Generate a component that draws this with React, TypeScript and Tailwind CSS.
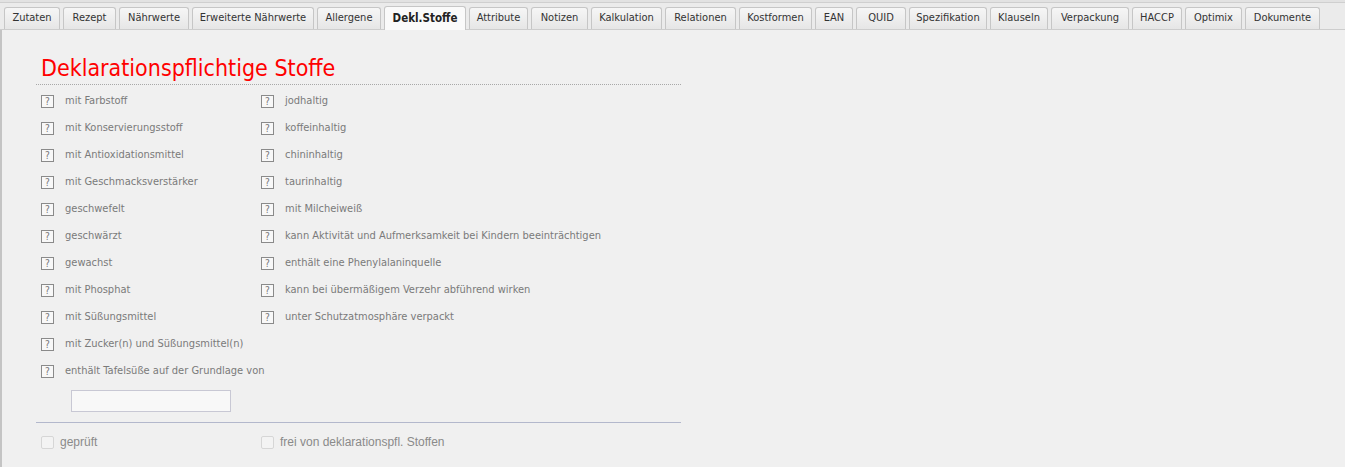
import React from "react";

const tabs: [string, number][] = [
  ["Zutaten", 56],
  ["Rezept", 53],
  ["Nährwerte", 70],
  ["Erweiterte Nährwerte", 122],
  ["Allergene", 64],
  ["Dekl.Stoffe", 82],
  ["Attribute", 59],
  ["Notizen", 57],
  ["Kalkulation", 71],
  ["Relationen", 71],
  ["Kostformen", 73],
  ["EAN", 38],
  ["QUID", 50],
  ["Spezifikation", 78],
  ["Klauseln", 58],
  ["Verpackung", 78],
  ["HACCP", 50],
  ["Optimix", 57],
  ["Dokumente", 75],
];

const left = [
  "mit Farbstoff",
  "mit Konservierungsstoff",
  "mit Antioxidationsmittel",
  "mit Geschmacksverstärker",
  "geschwefelt",
  "geschwärzt",
  "gewachst",
  "mit Phosphat",
  "mit Süßungsmittel",
  "mit Zucker(n) und Süßungsmittel(n)",
  "enthält Tafelsüße auf der Grundlage von",
];
const right = [
  "jodhaltig",
  "koffeinhaltig",
  "chininhaltig",
  "taurinhaltig",
  "mit Milcheiweiß",
  "kann Aktivität und Aufmerksamkeit bei Kindern beeinträchtigen",
  "enthält eine Phenylalaninquelle",
  "kann bei übermäßigem Verzehr abführend wirken",
  "unter Schutzatmosphäre verpackt",
];

const tah = { fontFamily: "Tahoma, 'DejaVu Sans Condensed', 'Liberation Sans', sans-serif" };

function Item({ label }: { label: string }) {
  return (
    <div className="flex items-center h-[27px] whitespace-nowrap">
      <div className="w-[13px] h-[13px] shrink-0 border border-[#8a8a8a] bg-[#f8f8f8] flex items-center justify-center text-[10px] leading-none text-[#777]">?</div>
      <span className="ml-[11px] text-[11px] text-[#7a7a7a]">{label}</span>
    </div>
  );
}

export default function App() {
  return (
    <div className="w-[1345px] h-[467px] bg-[#f0f0f0] overflow-hidden relative" style={tah}>
      <div className="h-[3px] bg-[#e2e2e2] border-b border-[#cfcfcf]" />
      <div className="flex items-end gap-[3px] pl-[4px] h-[27px] bg-[#ebebeb] border-b border-[#cdcdcd]">
        {tabs.map(([t, w]) => {
          const active = t === "Dekl.Stoffe";
          return (
            <div
              key={t}
              style={{ width: w }}
              className={
                active
                  ? "h-[24px] -mb-px flex items-center justify-center rounded-t-[3px] border border-b-0 border-[#c6c6c6] bg-[#fafafa] text-[11.5px] font-bold text-[#222]"
                  : "h-[22px] flex items-center justify-center rounded-t-[3px] border border-b-0 border-[#c6c6c6] bg-gradient-to-b from-[#f6f6f6] to-[#e6e6e6] text-[11px] text-[#333]"
              }
            >
              {t}
            </div>
          );
        })}
      </div>
      <div className="border-l-2 border-[#c4c4c4] h-full pl-[34px] pt-[22px]">
        <div className="w-[645px]">
          <div className="pl-[5px] text-[23px] leading-[32px] text-[#ff0000]">Deklarationspflichtige Stoffe</div>
          <div className="border-b border-dotted border-[#a8a8a8]" />
          <div className="flex pl-[5px] pt-[3px]">
            <div className="w-[220px]">
              {left.map((l) => (
                <Item key={l} label={l} />
              ))}
              <div className="pl-[30px] pt-[5px]">
                <div className="w-[160px] h-[22px] border border-[#c8c8d4] bg-[#f8f8f8]" />
              </div>
            </div>
            <div>
              {right.map((l) => (
                <Item key={l} label={l} />
              ))}
            </div>
          </div>
          <div className="mt-[10px] border-b border-[#b3b8cc]" />
          <div className="flex pl-[5px] pt-[11px] text-[12px] leading-[16px] text-[#8a8a8a]" style={{ fontFamily: "'Liberation Sans', Arial, sans-serif" }}>
            <div className="w-[220px] flex items-center">
              <div className="w-[13px] h-[13px] rounded-[2px] border border-[#d6d6d6] bg-[#f3f3f3]" />
              <span className="ml-[6px]">geprüft</span>
            </div>
            <div className="flex items-center">
              <div className="w-[13px] h-[13px] rounded-[2px] border border-[#d6d6d6] bg-[#f3f3f3]" />
              <span className="ml-[6px]">frei von deklarationspfl. Stoffen</span>
            </div>
          </div>
        </div>
      </div>
    </div>
  );
}
